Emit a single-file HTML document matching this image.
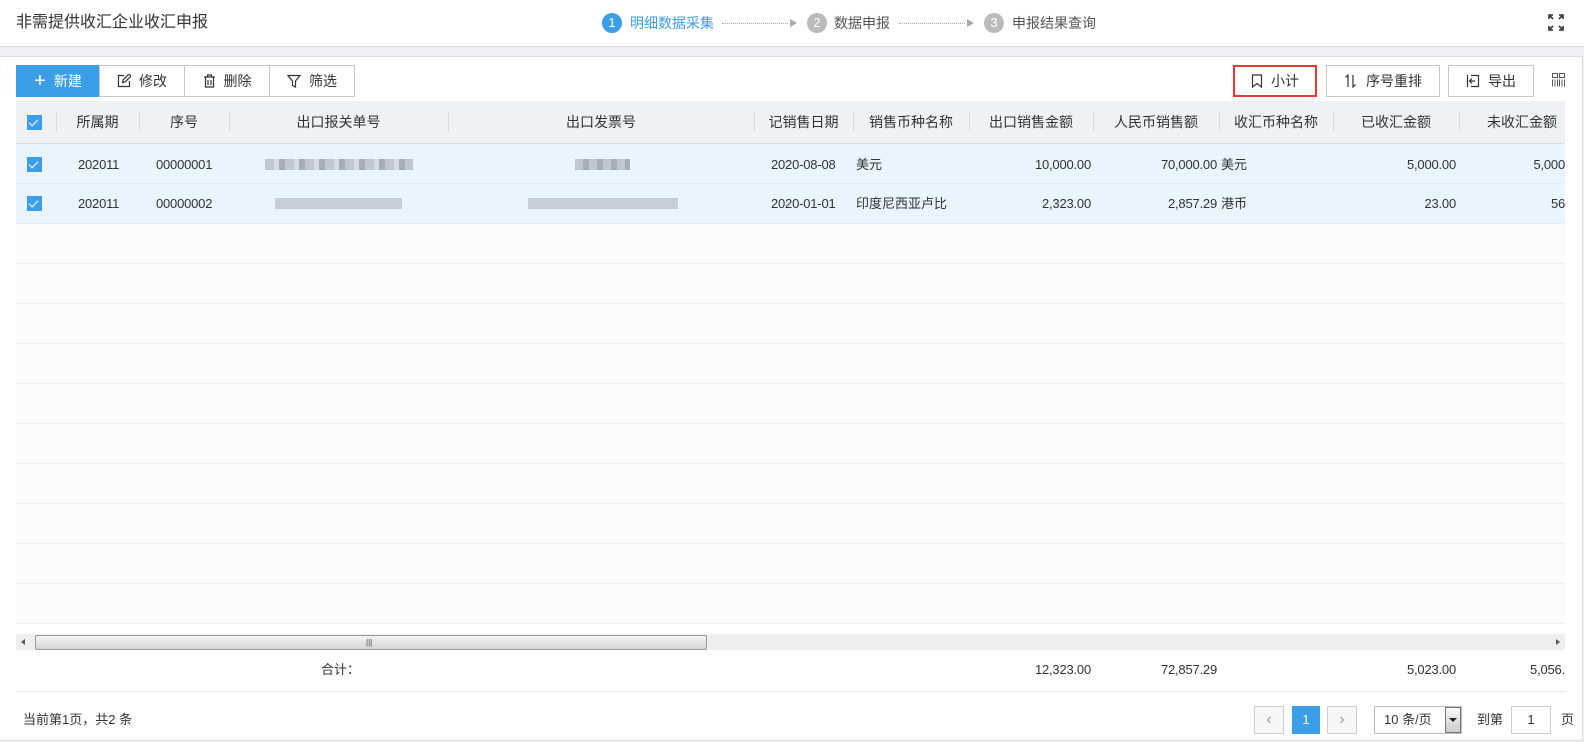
<!DOCTYPE html>
<html><head><meta charset="utf-8"><style>
*{margin:0;padding:0;box-sizing:border-box}
body{width:1584px;height:742px;background:#f0f0f4;font-family:"Liberation Sans","Noto Sans CJK SC",sans-serif;color:#333;position:relative;overflow:hidden;font-size:13px}
.a{position:absolute;white-space:nowrap;line-height:16px}
#hdr{left:0;top:0;width:1584px;height:47px;background:#fff;border-bottom:1px solid #dcdcdc}
#card{left:0;top:56px;width:1583px;height:685px;background:#fff;border:1px solid #dcdcdc;border-left:none}
.btn{position:absolute;top:65px;height:32px;border:1px solid #c8c8c8;background:#fff;font-size:14px;display:flex;align-items:center;justify-content:center;gap:8px;color:#333}
.th{top:101px;height:43px;line-height:43px;font-size:14px;color:#333;text-align:center}
.sep{position:absolute;top:112px;width:1px;height:20px;background:#dcdcdc}
.cb{position:absolute;width:15px;height:15px;background:#3d9ee8}
.cb:after{content:"";position:absolute;left:4px;top:2px;width:4px;height:8px;border:solid #fff;border-width:0 1px 1px 0;transform:rotate(45deg)}
.num{letter-spacing:-0.2px}
.blur{position:absolute;height:11px;background:#c9cdd6}
.step{position:absolute;top:13px;width:20px;height:20px;border-radius:50%;color:#fff;font-size:13px;text-align:center;line-height:20px}
.dot{position:absolute;top:23px;height:0;border-top:1px dotted #aaa}
.arr{position:absolute;top:19px;width:0;height:0;border-left:7px solid #aaa;border-top:4px solid transparent;border-bottom:4px solid transparent}
.hl{position:absolute;left:16px;width:1549px;height:1px;background:#eceef0}
</style></head><body>
<div class="a" id="hdr"></div>
<div class="a" style="left:16px;top:14px;font-size:16px;line-height:18px;color:#333">非需提供收汇企业收汇申报</div>
<div class="step" style="left:602px;background:#3d9ee8">1</div>
<div class="a" style="left:630px;top:15px;font-size:14px;color:#3d9ee8">明细数据采集</div>
<div class="dot" style="left:722px;width:66px"></div><div class="arr" style="left:790px"></div>
<div class="step" style="left:807px;background:#bbb">2</div>
<div class="a" style="left:834px;top:15px;font-size:14px;color:#555">数据申报</div>
<div class="dot" style="left:899px;width:66px"></div><div class="arr" style="left:967px"></div>
<div class="step" style="left:984px;background:#bbb">3</div>
<div class="a" style="left:1012px;top:15px;font-size:14px;color:#555">申报结果查询</div>
<svg class="a" style="left:1548px;top:14px" width="16" height="17" viewBox="0 0 16 17" fill="none" stroke="#333" stroke-width="1.6"><path d="M1 5V1h4M1 1l4 4M15 5V1h-4M15 1l-4 4M1 12v4h4M1 16l4-4M15 12v4h-4M15 16l-4-4"/></svg>

<div class="a" id="card"></div>
<div class="btn" style="left:16px;width:84px;background:#3d9ee8;border-color:#3d9ee8;color:#fff"><span style="font-size:20px;font-weight:300;line-height:1">+</span>新建</div>
<div class="btn" style="left:99px;width:86px"><svg width="14" height="14" viewBox="0 0 14 14" fill="none" stroke="#333" stroke-width="1.2"><path d="M7 1.5H1.5v11h11V7M5.5 8.5l.5-2.5 6-6 2 2-6 6z"/></svg>修改</div>
<div class="btn" style="left:184px;width:86px"><svg width="13" height="14" viewBox="0 0 13 14" fill="none" stroke="#333" stroke-width="1.2"><path d="M1 3h11M4.5 3V1h4v2M2.5 3v10h8V3M5 6v5M8 6v5"/></svg>删除</div>
<div class="btn" style="left:269px;width:86px"><svg width="14" height="14" viewBox="0 0 14 14" fill="none" stroke="#333" stroke-width="1.2"><path d="M1 1.5h12L8.5 7v6l-3-1.5V7z"/></svg>筛选</div>

<div class="btn" style="left:1233px;width:84px;border:2px solid #e53935"><svg width="12" height="14" viewBox="0 0 12 14" fill="none" stroke="#333" stroke-width="1.2"><path d="M1.5 1h9v12L6 9.5 1.5 13z"/></svg>小计</div>
<div class="btn" style="left:1326px;width:114px"><svg width="14" height="14" viewBox="0 0 14 14" fill="none" stroke="#333" stroke-width="1.2"><path d="M4 13V1L1.5 3.5M9 1v12l2.5-2.5"/></svg>序号重排</div>
<div class="btn" style="left:1448px;width:86px"><svg width="14" height="14" viewBox="0 0 14 14" fill="none" stroke="#333" stroke-width="1.2"><path d="M5 1.5h7.5v11H5M1.5 1v12M9 7H3.5M6 4.5L3.5 7 6 9.5"/></svg>导出</div>
<svg class="a" style="left:1552px;top:73px" width="13" height="14" viewBox="0 0 13 14" fill="none" stroke="#555" stroke-width="1"><path d="M.5.5h5v4h-5zM7.5.5h5v4h-5zM.5 6.5v7M3 6.5v7M5.5 6.5v7M7.5 6.5v7M10 6.5v7M12.5 6.5v7"/></svg>

<!-- table -->
<div class="a" style="left:16px;top:101px;width:1549px;height:43px;background:#f0f1f5;border-bottom:1px solid #dcdcdc"></div>
<div class="a" style="left:16px;top:144px;width:1549px;height:80px;background:#e9f4fd"></div>
<div class="a" style="left:16px;top:224px;width:1549px;height:400px;background:#fbfbfc"></div>
<div class="hl" style="top:183px;background:#e6eaee"></div>
<div class="hl" style="top:223px;background:#e6eaee"></div>
<div class="hl" style="top:263px"></div><div class="hl" style="top:303px"></div><div class="hl" style="top:343px"></div><div class="hl" style="top:383px"></div><div class="hl" style="top:423px"></div><div class="hl" style="top:463px"></div><div class="hl" style="top:503px"></div><div class="hl" style="top:543px"></div><div class="hl" style="top:583px"></div><div class="hl" style="top:623px"></div>

<div class="cb" style="left:27px;top:115px"></div>
<div class="sep" style="left:56px"></div><div class="sep" style="left:139px"></div><div class="sep" style="left:229px"></div><div class="sep" style="left:448px"></div><div class="sep" style="left:754px"></div><div class="sep" style="left:853px"></div><div class="sep" style="left:969px"></div><div class="sep" style="left:1093px"></div><div class="sep" style="left:1219px"></div><div class="sep" style="left:1333px"></div><div class="sep" style="left:1459px"></div>
<div class="a th" style="left:56px;width:83px">所属期</div>
<div class="a th" style="left:139px;width:90px">序号</div>
<div class="a th" style="left:229px;width:219px">出口报关单号</div>
<div class="a th" style="left:448px;width:306px">出口发票号</div>
<div class="a th" style="left:754px;width:99px">记销售日期</div>
<div class="a th" style="left:853px;width:116px">销售币种名称</div>
<div class="a th" style="left:969px;width:124px">出口销售金额</div>
<div class="a th" style="left:1093px;width:126px">人民币销售额</div>
<div class="a th" style="left:1219px;width:114px">收汇币种名称</div>
<div class="a th" style="left:1333px;width:126px">已收汇金额</div>
<div class="a th" style="left:1459px;width:106px;text-align:right;padding-right:8px">未收汇金额</div>

<div class="cb" style="left:27px;top:157px"></div>
<div class="a num" style="left:78px;top:157px">202011</div>
<div class="a num" style="left:156px;top:157px">00000001</div>
<div class="blur" style="left:265px;top:159px;width:148px;background:repeating-linear-gradient(90deg,#c2c6cf 0 9px,#d8dbe1 9px 14px,#a9adb8 14px 20px)"></div>
<div class="blur" style="left:575px;top:159px;width:55px;background:repeating-linear-gradient(90deg,#c2c6cf 0 8px,#a9adb8 8px 14px)"></div>
<div class="a num" style="left:771px;top:157px">2020-08-08</div>
<div class="a" style="left:856px;top:157px">美元</div>
<div class="a num" style="right:493px;top:157px">10,000.00</div>
<div class="a num" style="right:367px;top:157px">70,000.00</div>
<div class="a" style="left:1221px;top:157px">美元</div>
<div class="a num" style="right:128px;top:157px">5,000.00</div>
<div class="a num" style="right:19px;top:157px">5,000</div>

<div class="cb" style="left:27px;top:196px"></div>
<div class="a num" style="left:78px;top:196px">202011</div>
<div class="a num" style="left:156px;top:196px">00000002</div>
<div class="blur" style="left:275px;top:198px;width:127px"></div>
<div class="blur" style="left:528px;top:198px;width:150px"></div>
<div class="a num" style="left:771px;top:196px">2020-01-01</div>
<div class="a" style="left:856px;top:196px">印度尼西亚卢比</div>
<div class="a num" style="right:493px;top:196px">2,323.00</div>
<div class="a num" style="right:367px;top:196px">2,857.29</div>
<div class="a" style="left:1221px;top:196px">港币</div>
<div class="a num" style="right:128px;top:196px">23.00</div>
<div class="a num" style="right:19px;top:196px">56</div>

<!-- scrollbar -->
<div class="a" style="left:16px;top:634px;width:1549px;height:16px;background:#eeeeee"></div>
<div class="a" style="left:21px;top:639px;width:0;height:0;border-right:4px solid #555;border-top:3px solid transparent;border-bottom:3px solid transparent"></div>
<div class="a" style="left:35px;top:635px;width:672px;height:15px;border:1px solid #999;border-radius:2px;background:linear-gradient(#f4f4f4,#d4d4d4)"></div>
<div class="a" style="left:366px;top:635px;font-size:8px;color:#444">|||</div>
<div class="a" style="left:1556px;top:639px;width:0;height:0;border-left:4px solid #555;border-top:3px solid transparent;border-bottom:3px solid transparent"></div>

<!-- totals -->
<div class="a" style="left:321px;top:662px">合计：</div>
<div class="a num" style="right:493px;top:662px">12,323.00</div>
<div class="a num" style="right:367px;top:662px">72,857.29</div>
<div class="a num" style="right:128px;top:662px">5,023.00</div>
<div class="a num" style="right:19px;top:662px">5,056.</div>
<div class="a" style="left:16px;top:691px;width:1549px;height:1px;background:#e8e8e8"></div>

<!-- footer -->
<div class="a" style="left:23px;top:712px;font-size:13px">当前第1页，共2 条</div>
<div class="a" style="left:1254px;top:706px;width:30px;height:28px;border:1px solid #ccc;background:#f7f7f7;color:#999;text-align:center;line-height:26px;font-size:16px">&lsaquo;</div>
<div class="a" style="left:1292px;top:706px;width:28px;height:28px;background:#3d9ee8;color:#fff;text-align:center;line-height:28px">1</div>
<div class="a" style="left:1327px;top:706px;width:30px;height:28px;border:1px solid #ccc;background:#f7f7f7;color:#999;text-align:center;line-height:26px;font-size:16px">&rsaquo;</div>
<div class="a" style="left:1374px;top:706px;width:88px;height:28px;border:1px solid #bbb;background:#fff;padding-left:9px;line-height:26px">10 条/页</div>
<div class="a" style="left:1445px;top:707px;width:16px;height:26px;border:1px solid #777;background:linear-gradient(#fafafa,#ccc)"></div>
<div class="a" style="left:1449px;top:718px;width:0;height:0;border-top:4px solid #222;border-left:4px solid transparent;border-right:4px solid transparent"></div>
<div class="a" style="left:1477px;top:712px">到第</div>
<div class="a" style="left:1511px;top:706px;width:40px;height:28px;border:1px solid #ccc;text-align:center;line-height:26px">1</div>
<div class="a" style="left:1561px;top:712px">页</div>
</body></html>
